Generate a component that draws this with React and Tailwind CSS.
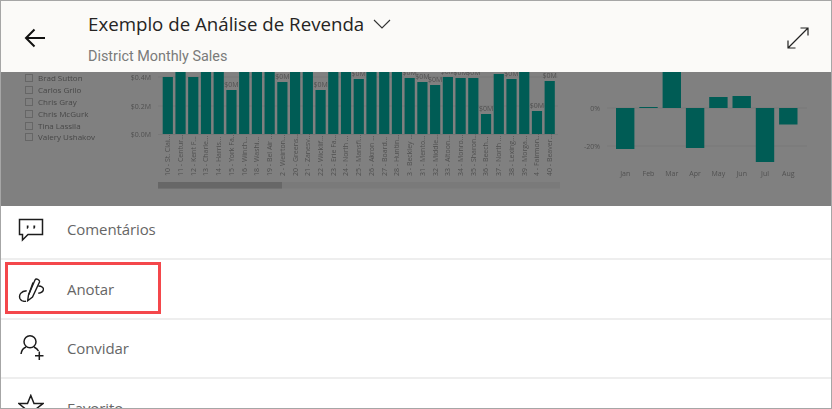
const people = ['Brad Sutton', 'Carlos Grilo', 'Chris Gray', 'Chris McGurk', 'Tina Lassila', 'Valery Ushakov']

// top of each bar in page pixels, the tall ones run under the header
const stores = [
  ['10 - St. Clai...', 77], ['11 - Centur...', 60], ['12 - Kent F...', 77], ['13 - Charle...', 60],
  ['14 - Harris...', 60], ['15 - York Fa...', 90, '$0M'], ['16 - Winch...', 60], ['18 - Washi...', 60],
  ['19 - Bel Air ...', 60], ['2 - Weirton...', 82, '$0M'], ['20 - Greens...', 60], ['21 - Zanesv...', 60],
  ['22 - Wicklif...', 90, '$0M'], ['23 - Erie Fa...', 60], ['24 - North ...', 60], ['25 - Mansfi...', 79, '$0M'],
  ['26 - Akron ...', 60], ['27 - Board...', 60], ['28 - Huntin...', 60], ['3 - Beckley ...', 78, '$0M'],
  ['31 - Mento...', 82, '$0M'], ['32 - Middle...', 85, '$0M'], ['33 - Altoon...', 77, '$0M'], ['34 - Monro...', 78, '$0M'],
  ['35 - Sharon...', 78, '$0M'], ['36 - Beech...', 114, '$0M'], ['37 - North ...', 74], ['38 - Lexing...', 79, '$0M'],
  ['39 - Morga...', 60], ['4 - Fairmon...', 111, '$0M'], ['40 - Beaver...', 81, '$0M'],
]

const months = [
  ['Jan', 108, 149], ['Feb', 107, 108], ['Mar', 60, 108], ['Apr', 108, 148],
  ['May', 97, 108], ['Jun', 96, 108], ['Jul', 108, 162], ['Aug', 108, 124.5],
]

const axisFont = { fontFamily: '"Open Sans", sans-serif', fontSize: 7, fill: '#505050' }

function BarChart() {
  return (
    <svg className="w-[441px] h-[134px] shrink-0" viewBox="124 72 441 134">
      {[77, 106].map((y) => <line key={y} x1="158" x2="558" y1={y} y2={y} stroke="#787878" strokeWidth="1" />)}
      <line x1="158" x2="558" y1="134.500" y2="134.500" stroke="#787878" strokeWidth="1" />
      <text x="151" y="80" textAnchor="end" style={axisFont}>$0.4M</text>
      <text x="151" y="108.500" textAnchor="end" style={axisFont}>$0.2M</text>
      <text x="151" y="136.500" textAnchor="end" style={axisFont}>$0.0M</text>
      {stores.map(([name, top, label], i) => {
        const x = 162.7 + i * 12.73
        return (
          <g key={name + i}>
            <rect x={x} y={top} width="10.2" height={134 - top} fill="#005c55" />
            {label && <text x={x + 5.1} y={top - 3} textAnchor="middle" style={axisFont}>{label}</text>}
            <text transform={`rotate(-90 ${x + 7.5} 176)`} x={x + 7.5} y="176" style={axisFont}>{name}</text>
          </g>
        )
      })}
      <rect x="158" y="182" width="402" height="6.5" fill="#7a7a7a" />
      <rect x="158" y="182" width="124" height="6.5" fill="#676767" />
    </svg>
  )
}

function GrowthChart() {
  return (
    <svg className="w-[266px] h-[134px] shrink-0" viewBox="565 72 266 134">
      <line x1="607" x2="807" y1="108" y2="108" stroke="#787878" />
      <line x1="607" x2="807" y1="146" y2="146" stroke="#787878" />
      <text x="600" y="110.500" textAnchor="end" style={axisFont}>0%</text>
      <text x="600" y="149" textAnchor="end" style={axisFont}>-20%</text>
      {months.map(([m, top, bottom], i) => {
        const x = 616 + i * 23.3
        return (
          <g key={m}>
            <rect x={x} y={top} width="18.4" height={bottom - top} fill="#005c55" />
            <text x={x + 9.2} y="175.500" textAnchor="middle" style={axisFont}>{m}</text>
          </g>
        )
      })}
    </svg>
  )
}

function CommentIcon() {
  return (
    <svg className="w-[26px] h-[26px]" viewBox="0 0 26 26" fill="none" stroke="#1c1c1c" strokeWidth="1.5">
      <path d="M1.500 2.500h23v15H10L4.500 23v-5.500h-3z" />
      <path d="M8.800 8.500h1.700v2l-.8 1.300h-.9zM15.400 8.500h1.800v2l-.8 1.300h-1z" fill="#1c1c1c" stroke="none" />
    </svg>
  )
}

function PenIcon() {
  return (
    <svg className="w-[26px] h-[26px]" viewBox="0 0 26 26" fill="none" stroke="#1c1c1c" strokeWidth="1.4">
      <path d="M9.700 24.700l.8-5.700L17 4c1-2 5-.5 4.500 2L14.500 21z" />
      <path d="M15 6.500l-4.200 12" />
      <path d="M20.300 10c3.700 0 5.700 2 5 4-.5 2-2.800 3-5 3.300" />
      <path d="M8.700 14.700c-5.700.3-8.200 4.300-6.700 8 1 2.300 4 2.800 6 2.600" />
    </svg>
  )
}

function InviteIcon() {
  return (
    <svg className="w-[26px] h-[26px]" viewBox="0 0 26 26" fill="none" stroke="#1c1c1c" strokeWidth="1.5">
      <circle cx="12" cy="6.800" r="6" />
      <path d="M3 19c.5-3.500 2.500-6 5-7M16 12c2 1 3.500 2 4.500 4" />
      <path d="M21.300 16.500V25M17 20.700h8.500" />
    </svg>
  )
}

function StarIcon() {
  return (
    <svg className="w-[26px] h-[26px]" viewBox="0 0 26 26" fill="none" stroke="#1c1c1c" strokeWidth="1.5">
      <path d="M12.800 1.500L16 9.500h9L18 15l2.500 9-7.700-5L5 24l2.500-9-6.700-5.500h8.700z" />
    </svg>
  )
}

export default function App() {
  return (
    <div className="relative w-[832px] h-[409px] overflow-hidden flex flex-col border border-[#a6a6a6] bg-white">
      {/* Header */}
      <header className="h-[71px] shrink-0 flex items-start bg-[#fbfaf8]">
        <div className="w-[87px] shrink-0 pl-[23px] pt-[26px]">
          <svg className="w-[22px] h-[22px]" viewBox="0 0 22 22" fill="none" stroke="#111" strokeWidth="2">
            <path d="M2 11h19M10.500 2.500L2 11l8.500 8.500" />
          </svg>
        </div>
        <div className="flex-1 pt-[9px]">
          <div className="flex items-center gap-[9px]">
            <h1 className="text-[18.700px] leading-[28px] text-[#252423] font-['Open_Sans',sans-serif]">Exemplo de Análise de Revenda</h1>
            <svg className="w-[18px] h-[10px]" viewBox="0 0 18 10" fill="none" stroke="#333" strokeWidth="1.1">
              <path d="M1 1l8 8 8-8" />
            </svg>
          </div>
          <p className="mt-[9px] text-[14.400px] leading-[20px] text-[#7a7a7a] font-['Roboto',sans-serif]">District Monthly Sales</p>
        </div>
        <div className="pr-[21px] pt-[25px]">
          <svg className="w-[24px] h-[24px]" viewBox="0 0 24 24" fill="none" stroke="#222" strokeWidth="1.2">
            <path d="M2 22L22 2M14.500 2H22v7.500M2 14.500V22h7.500" />
          </svg>
        </div>
      </header>

      {/* Dimmed report behind the sheet */}
      <section className="h-[134px] shrink-0 flex overflow-hidden bg-[#808080] blur-[0.3px]">
        <ul className="w-[123px] shrink-0 pl-[24px]">
          {people.map((p) => (
            <li key={p} className="h-[11.900px] flex items-center gap-[5px] text-[8px] text-[#474747] font-['Open_Sans',sans-serif]">
              <span className="w-[8px] h-[8px] border border-[#666666]" />
              {p}
            </li>
          ))}
        </ul>
        <BarChart />
        <GrowthChart />
      </section>

      {/* Actions */}
      <div className="flex-1 bg-white text-[15px] text-[#666666] font-['Open_Sans',sans-serif] tracking-[-0.1px]">
        <div className="h-[54px] pb-[5px] flex items-center pl-[17px] gap-[23px] border-b-2 border-[#eeeeee]">
          <CommentIcon />
          <span>Comentários</span>
        </div>
        <div className="h-[59.500px] flex items-center pl-[17px] gap-[23px] border-b-2 border-[#eeeeee]">
          <PenIcon />
          <span>Anotar</span>
        </div>
        <div className="h-[59.500px] flex items-center pl-[17px] gap-[23px] border-b-2 border-[#eeeeee]">
          <InviteIcon />
          <span>Convidar</span>
        </div>
        <div className="pt-[15px] flex items-start pl-[17px] gap-[23px]">
          <StarIcon />
          <span className="pt-[3px]">Favorito</span>
        </div>
      </div>

      {/* Highlight box */}
      <div className="absolute left-[4px] top-[261px] w-[156px] h-[52px] border-[3px] border-[#f4474b]" />
    </div>
  )
}
